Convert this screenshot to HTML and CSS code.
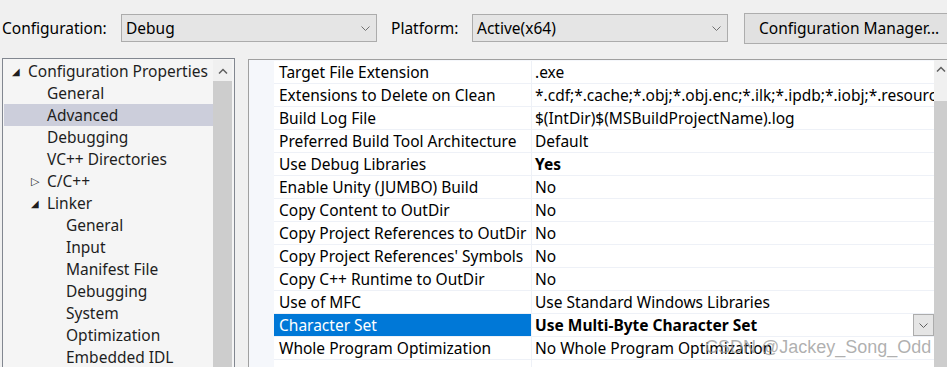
FILE: index.html
```html
<!DOCTYPE html>
<html lang="en">
<head>
    <meta charset="UTF-8">
    <title>Property Pages - Advanced</title>
    <link rel="stylesheet" href="styles.css">
</head>
<body>
    <div class="toolbar">
        <span class="label label-config">Configuration:</span>
        <div class="combo">
            <span>Debug</span>
            <svg class="chev" width="9" height="5" viewBox="0 0 9 5"><path d="M0.5 0.5 L4.5 4.5 L8.5 0.5" fill="none" stroke="#707070" stroke-width="1"/></svg>
        </div>
        <span class="label label-platform">Platform:</span>
        <div class="combo">
            <span>Active(x64)</span>
            <svg class="chev" width="9" height="5" viewBox="0 0 9 5"><path d="M0.5 0.5 L4.5 4.5 L8.5 0.5" fill="none" stroke="#707070" stroke-width="1"/></svg>
        </div>
        <button class="btn">Configuration Manager...</button>
    </div>

    <div class="main">
        <div class="tree-panel">
            <ul class="tree">
                <li class="lvl0"><span class="tri">&#9698;</span>Configuration Properties</li>
                <li class="lvl1">General</li>
                <li class="lvl1 selected">Advanced</li>
                <li class="lvl1">Debugging</li>
                <li class="lvl1">VC++ Directories</li>
                <li class="lvl1 has-tri"><span class="tri closed">&#9655;</span>C/C++</li>
                <li class="lvl1 has-tri"><span class="tri">&#9698;</span>Linker</li>
                <li class="lvl2">General</li>
                <li class="lvl2">Input</li>
                <li class="lvl2">Manifest File</li>
                <li class="lvl2">Debugging</li>
                <li class="lvl2">System</li>
                <li class="lvl2">Optimization</li>
                <li class="lvl2">Embedded IDL</li>
            </ul>
            <div class="vscroll">
                <div class="arrow">
                    <svg width="10" height="6" viewBox="0 0 10 6"><path d="M1 5.5 L5 1.5 L9 5.5" fill="none" stroke="#606060" stroke-width="1.5"/></svg>
                </div>
                <div class="thumb"></div>
            </div>
        </div>

        <div class="grid-panel">
            <div class="grid">
                <div class="row"><div class="name">Target File Extension</div><div class="value">.exe</div></div>
                <div class="row"><div class="name">Extensions to Delete on Clean</div><div class="value">*.cdf;*.cache;*.obj;*.obj.enc;*.ilk;*.ipdb;*.iobj;*.resources;*.tlb</div></div>
                <div class="row"><div class="name">Build Log File</div><div class="value">$(IntDir)$(MSBuildProjectName).log</div></div>
                <div class="row"><div class="name">Preferred Build Tool Architecture</div><div class="value">Default</div></div>
                <div class="row"><div class="name">Use Debug Libraries</div><div class="value bold">Yes</div></div>
                <div class="row"><div class="name">Enable Unity (JUMBO) Build</div><div class="value">No</div></div>
                <div class="row"><div class="name">Copy Content to OutDir</div><div class="value">No</div></div>
                <div class="row"><div class="name">Copy Project References to OutDir</div><div class="value">No</div></div>
                <div class="row"><div class="name wrap">Copy Project References' Symbols to OutDir</div><div class="value">No</div></div>
                <div class="row"><div class="name">Copy C++ Runtime to OutDir</div><div class="value">No</div></div>
                <div class="row"><div class="name">Use of MFC</div><div class="value">Use Standard Windows Libraries</div></div>
                <div class="row active"><div class="name">Character Set</div><div class="value bold">Use Multi-Byte Character Set
                    <div class="drop">
                        <svg width="9" height="5" viewBox="0 0 9 5"><path d="M0.5 0.5 L4.5 4.5 L8.5 0.5" fill="none" stroke="#606060" stroke-width="1"/></svg>
                    </div>
                </div></div>
                <div class="row"><div class="name">Whole Program Optimization</div><div class="value">No Whole Program Optimization</div></div>
                <div class="row"><div class="name"></div><div class="value"></div></div>
            </div>
            <div class="vscroll vscroll-right">
                <div class="arrow">
                    <svg width="10" height="6" viewBox="0 0 10 6"><path d="M1 5.5 L5 1.5 L9 5.5" fill="none" stroke="#606060" stroke-width="1.5"/></svg>
                </div>
                <div class="thumb"></div>
            </div>
            <div class="watermark">CSDN @Jackey_Song_Odd</div>
        </div>
    </div>
</body>
</html>
```

FILE: styles.css
```css
body {
    margin: 0;
    background: #f0f0f0;
    color: #1e1e1e;
    font-family: "Noto Sans", "Open Sans", sans-serif;
    font-size: 15.5px;
    width: 947px;
    height: 367px;
    overflow: hidden;
}

.toolbar {
    display: flex;
    align-items: center;
    height: 56px;
    white-space: nowrap;
}

.label {
    color: #000;
    flex-shrink: 0;
}

.label-config {
    width: 121px;
    padding-left: 2px;
    box-sizing: border-box;
}

.label-platform {
    width: 95px;
    padding-left: 14px;
    box-sizing: border-box;
}

.combo {
    display: flex;
    align-items: center;
    justify-content: space-between;
    box-sizing: border-box;
    flex-shrink: 0;
    height: 28px;
    width: 256px;
    padding: 0 6px 0 4px;
    background: #e5e5e5;
    border: 1px solid #acacac;
    color: #000;
}

.btn {
    box-sizing: border-box;
    height: 31px;
    width: 215px;
    margin-left: 16px;
    flex-shrink: 0;
    padding: 0 0 0 14px;
    text-align: left;
    background: #e1e1e1;
    border: 1px solid #adadad;
    font-family: inherit;
    font-size: 15.5px;
    color: #000;
}

.main {
    display: flex;
    align-items: flex-start;
    padding-left: 2px;
    margin-top: 2px;
}

.tree-panel {
    display: flex;
    box-sizing: border-box;
    width: 233px;
    height: 312px;
    border: 1px solid #828790;
    border-bottom: 0;
    background: #f5f5f5;
    padding: 1px 2px 0 1px;
    overflow: hidden;
}

.tree {
    list-style: none;
    margin: 0;
    padding: 0;
    width: 209px;
}

.tree li {
    height: 22px;
    line-height: 22px;
    white-space: nowrap;
    position: relative;
}

.tree .lvl0 {
    padding-left: 24px;
}

.tree .lvl1 {
    padding-left: 43px;
}

.tree .lvl2 {
    padding-left: 62px;
}

.tree .selected {
    background: #cccedb;
}

.tri {
    position: absolute;
    font-size: 10px;
    color: #1e1e1e;
    left: 8px;
}

.has-tri .tri {
    left: 27px;
}

.tri.closed {
    font-size: 11px;
}

.vscroll {
    width: 19px;
    display: flex;
    flex-direction: column;
    flex-shrink: 0;
    background: #f0f0f0;
}

.arrow {
    height: 21px;
    display: flex;
    align-items: center;
    justify-content: center;
}

.thumb {
    flex: 1;
    background: #cdcdcd;
}

.grid-panel {
    position: relative;
    display: flex;
    margin-left: 13px;
    margin-top: 1px;
    flex: 1;
    height: 308px;
    border-top: 1px solid #a0a0a0;
    border-left: 1px solid #a0a0a0;
    background: #f5f7fb;
    overflow: hidden;
}

.grid {
    flex: 1;
    padding-left: 25px;
    padding-top: 1px;
    min-width: 0;
}

.row {
    display: flex;
    height: 22px;
    border-bottom: 1px solid #eef1f7;
    background: #fff;
    color: #000;
    line-height: 23px;
}

.name {
    width: 258px;
    height: 22px;
    flex-shrink: 0;
    box-sizing: border-box;
    padding-left: 5px;
    border-right: 1px solid #eef1f7;
    white-space: nowrap;
    overflow: hidden;
}

.name.wrap {
    white-space: normal;
}

.value {
    flex: 1;
    padding-left: 3px;
    white-space: nowrap;
    overflow: hidden;
    position: relative;
}

.bold {
    font-weight: bold;
}

.row.active .name {
    background: #0078d7;
    color: #fff;
}

.drop {
    position: absolute;
    right: 0;
    top: 0;
    box-sizing: border-box;
    width: 21px;
    height: 22px;
    background: #e5e5e5;
    border: 1px solid #acacac;
    display: flex;
    align-items: center;
    justify-content: center;
}

.vscroll-right {
    width: 13px;
    height: 100%;
}

.vscroll-right .arrow {
    height: 41px;
    align-items: flex-start;
    padding-top: 6px;
    box-sizing: border-box;
    justify-content: flex-start;
    padding-left: 2px;
}

.watermark {
    position: absolute;
    left: 456px;
    top: 277px;
    font-family: "Liberation Sans", sans-serif;
    font-size: 18px;
    color: rgba(150, 150, 150, 0.75);
    white-space: nowrap;
}
```
